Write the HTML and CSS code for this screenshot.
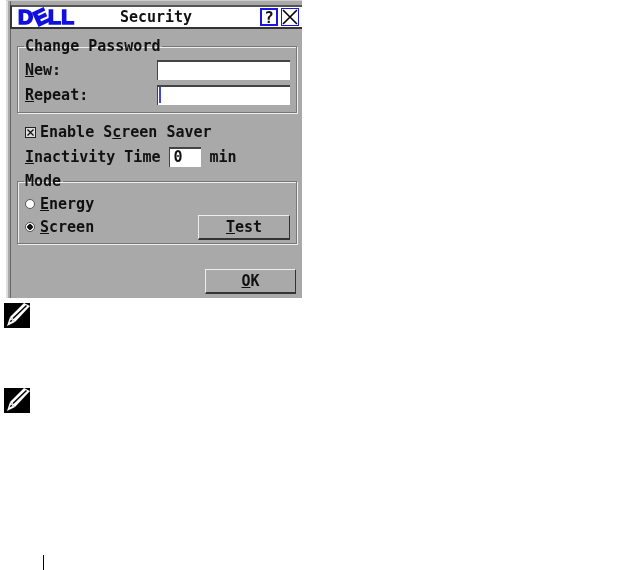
FILE: index.html
```html
<!DOCTYPE html>
<html lang="en">
<head>
    <meta charset="UTF-8">
    <title>Security</title>
    <link rel="stylesheet" href="styles.css">
</head>
<body>
    <div class="dialog">
        <div class="titlebar">
            <div class="logo">D<span class="logo-e">E</span>LL</div>
            <div class="title">Security</div>
            <div class="help">?</div>
            <div class="close">
                <svg width="16" height="16" viewBox="0 0 16 16"><path d="M1 1L15 15M15 1L1 15" stroke="#000" stroke-width="1.6" fill="none"/></svg>
            </div>
        </div>
        <fieldset class="group password">
            <legend>Change Password</legend>
            <div class="row"><label><u>N</u>ew:</label><div class="field"></div></div>
            <div class="row"><label><u>R</u>epeat:</label><div class="field"><div class="caret"></div></div></div>
        </fieldset>
        <div class="check-row">
            <svg class="box" width="11" height="11" viewBox="0 0 11 11"><rect x="0.5" y="0.5" width="10" height="10" fill="#ddd" stroke="#222"/><path d="M2.5 2.5L8.5 8.5M8.5 2.5L2.5 8.5" stroke="#111" stroke-width="1.3"/></svg>
            <span>Enable S<u>c</u>reen Saver</span>
        </div>
        <div class="time-row">
            <span><u>I</u>nactivity Time</span>
            <div class="field small">0</div>
            <span>min</span>
        </div>
        <fieldset class="group mode">
            <legend>Mode</legend>
            <div class="radio-row">
                <div class="radio"></div>
                <span><u>E</u>nergy</span>
            </div>
            <div class="radio-row">
                <div class="radio on"></div>
                <span><u>S</u>creen</span>
                <button class="btn test"><u>T</u>est</button>
            </div>
        </fieldset>
        <div class="footer"><button class="btn ok"><u>O</u>K</button></div>
    </div>

    <svg class="note-icon first" width="26" height="25" viewBox="0 0 26 25">
        <rect width="26" height="25" fill="#000"/>
        <path d="M20 0L26 3L11 19L6 14Z" fill="#fff"/>
        <path d="M22.5 2.5L9 15.5" stroke="#000" stroke-width="1.5"/>
        <path d="M6 14L11 19L3 23Z" fill="#fff"/>
        <path d="M7 16.5L8.5 18L5.5 19.5Z" fill="#000"/>
    </svg>
    <svg class="note-icon second" width="26" height="25" viewBox="0 0 26 25">
        <rect width="26" height="25" fill="#000"/>
        <path d="M20 0L26 3L11 19L6 14Z" fill="#fff"/>
        <path d="M22.5 2.5L9 15.5" stroke="#000" stroke-width="1.5"/>
        <path d="M6 14L11 19L3 23Z" fill="#fff"/>
        <path d="M7 16.5L8.5 18L5.5 19.5Z" fill="#000"/>
    </svg>
    <div class="page-rule"></div>
</body>
</html>
```

FILE: styles.css
```css
html, body {
    margin: 0;
    background: white;
}

body {
    width: 641px;
    height: 570px;
    overflow: hidden;
    font-family: "DejaVu Sans Mono", monospace;
    font-weight: bold;
    font-size: 15px;
    color: #111;
}

.dialog {
    box-sizing: border-box;
    width: 296px;
    height: 298px;
    margin-left: 6px;
    padding-top: 5px;
    background: #a9a9a9;
    border-top: 1px solid #ccc;
    border-left: 1px solid #ddd;
    box-shadow: inset 1px 0 0 #ddd, inset 3px 0 0 #a9a9a9, inset 4px 0 0 #666;
    filter: blur(0.3px);
}

.titlebar {
    display: flex;
    align-items: center;
    box-sizing: border-box;
    height: 24px;
    margin-top: -1px;
    margin-left: 3px;
    padding: 0 3px 0 6px;
    background: white;
    border-top: 2px solid #555;
    border-bottom: 2px solid #333;
    border-left: 2px solid #333;
}

.logo {
    width: 63px;
    font-family: "Liberation Sans", sans-serif;
    font-weight: bold;
    font-size: 21px;
    line-height: 20px;
    letter-spacing: 0.4px;
    color: #1010e0;
    -webkit-text-stroke: 1.6px #1010e0;
}

.logo-e {
    display: inline-block;
    transform: rotate(-25deg);
}

.title {
    width: 150px;
    text-align: center;
}

.help, .close {
    display: flex;
    align-items: center;
    justify-content: center;
    box-sizing: border-box;
    width: 18px;
    height: 18px;
    border: 1px solid #1818e0;
}

.help {
    margin-left: auto;
    margin-right: 3px;
    border-width: 2px;
    font-size: 16px;
}

.group {
    box-sizing: border-box;
    margin: 0 5px 0 10px;
    width: 280px;
    padding: 0 6px 0 7px;
    border: 1px solid #777;
    box-shadow: 1px 1px 0 #eee, inset 1px 1px 0 #eee;
}

legend {
    margin-left: -1px;
    padding: 0 2px 0 1px;
    line-height: 14px;
}

.password {
    height: 74px;
    margin-top: 10px;
}

.row {
    display: flex;
    align-items: center;
    justify-content: space-between;
    height: 20px;
    margin-bottom: 5px;
}

.row:first-of-type {
    margin-top: 7px;
}

.field {
    box-sizing: border-box;
    width: 133px;
    height: 20px;
    padding-left: 1px;
    background: white;
    border-top: 2px solid #444;
    border-left: 1px solid #444;
}

.caret {
    width: 2px;
    height: 16px;
    background: #4444dd;
}

.check-row {
    display: flex;
    align-items: center;
    gap: 4px;
    height: 16px;
    margin: 11px 0 0 18px;
}

.time-row {
    display: flex;
    align-items: center;
    height: 20px;
    margin: 7px 0 0 18px;
}

.field.small {
    width: 32px;
    margin: 0 8px 0 9px;
    padding-left: 3px;
    line-height: 17px;
}

.mode {
    height: 70px;
    margin-top: 7px;
    padding-top: 4px;
}

.radio-row {
    display: flex;
    align-items: center;
    gap: 5px;
    height: 23px;
}

.radio {
    box-sizing: border-box;
    width: 10px;
    height: 10px;
    background: white;
    border: 1px solid #555;
    border-radius: 50%;
}

.radio.on {
    background: radial-gradient(circle, #111 2.5px, white 3px);
}

.btn {
    box-sizing: border-box;
    height: 25px;
    padding: 0;
    font: inherit;
    color: inherit;
    background: #a9a9a9;
    border: 1px solid #eee;
    border-right-color: #333;
    border-bottom: 2px solid #333;
}

.test {
    width: 92px;
    margin-top: 1px;
    margin-left: auto;
}

.footer {
    display: flex;
    justify-content: flex-end;
    padding-right: 6px;
    margin-top: 25px;
}

.ok {
    width: 91px;
}

.note-icon {
    position: absolute;
    left: 4px;
}

.note-icon.first {
    top: 303px;
}

.note-icon.second {
    top: 388px;
}

.page-rule {
    position: absolute;
    left: 43px;
    top: 555px;
    width: 1px;
    height: 15px;
    background: black;
}
```
